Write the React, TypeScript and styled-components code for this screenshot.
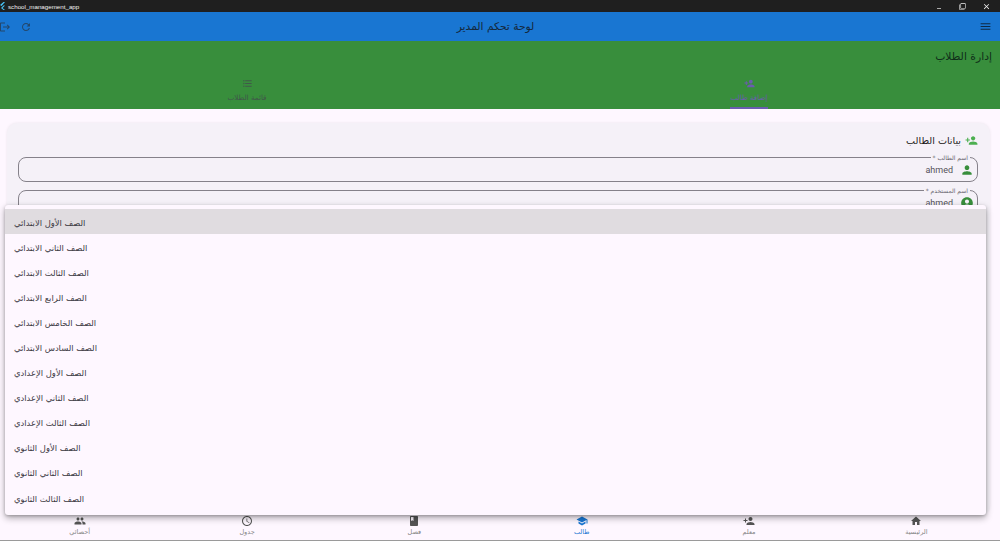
import styled, { createGlobalStyle } from 'styled-components'
import {
  MdMenu, MdRefresh, MdLogout, MdPersonAdd, MdPerson, MdAccountCircle, MdHome, MdSchool,
  MdBook, MdAccessTime, MdPeople, MdFormatListBulleted, MdMinimize, MdClose, MdFilterNone,
} from 'react-icons/md'

const Global = createGlobalStyle`
  html, body { margin: 0; padding: 0; height: 100%; }
  body { background: #fef7ff; font-family: "DejaVu Sans", "Noto Sans", sans-serif; overflow: hidden; }
`

const ui = {
  Page: styled.div`
    position: relative;
    width: 1000px;
    height: 541px;
    display: flex;
    flex-direction: column;
    overflow: hidden;
    background: #fef7ff;
  `,
  TitleBar: styled.div`
    height: 12px;
    flex: none;
    display: flex;
    align-items: center;
    justify-content: space-between;
    background: #1f1f1f;
    color: #f2f2f2;
    font: 6.2px "Liberation Sans", sans-serif;
    padding-left: 8px;
    position: relative;
  `,
  Logo: styled.svg`
    position: absolute;
    left: 0;
    top: 2px;
    width: 5px;
    height: 8px;
  `,
  WinButtons: styled.div`
    display: flex;
    align-items: center;
    gap: 16px;
    padding-right: 9px;
  `,
  AppBar: styled.header`
    height: 29px;
    flex: none;
    margin-left: -4px;
    display: grid;
    grid-template-columns: 1fr auto 1fr;
    align-items: center;
    padding: 0 8px 0 3px;
    background: #1976d2;
    color: #0f2a45;
  `,
  AppTitle: styled.h1`
    margin: 0;
    font-size: 10.7px;
    font-weight: 400;
    color: #14283c;
  `,
  BarActions: styled.div`
    display: flex;
    align-items: center;
    justify-content: flex-end;
    gap: 9px;
    color: #24476b;
  `,
  Green: styled.section`
    height: 68px;
    flex: none;
    margin-left: -4px;
    display: flex;
    flex-direction: column;
    background: #388e3c;
  `,
  Heading: styled.h2`
    margin: 0;
    padding: 9px 8px 0 0;
    height: 30px;
    box-sizing: border-box;
    font-size: 10.8px;
    font-weight: 400;
    color: #10301a;
  `,
  Tabs: styled.div`
    flex: 1;
    display: flex;
  `,
  Tab: styled.div<{ $active?: boolean }>`
    flex: 1;
    display: flex;
    flex-direction: column;
    align-items: center;
    justify-content: flex-end;
    gap: 4px;
    font-size: 7.2px;
    color: ${({ $active }) => ($active ? '#6a5cb0' : '#40584a')};
  `,
  TabLabel: styled.span<{ $active?: boolean }>`
    padding-bottom: 5px;
    width: 38px;
    text-align: center;
    white-space: nowrap;
    display: flex;
    justify-content: center;
    border-bottom: 2px solid ${({ $active }) => ($active ? '#6a5cb0' : 'transparent')};
  `,
  Content: styled.main`
    flex: 1;
    min-height: 0;
    padding: 14px 10px 0 7px;
  `,
  Card: styled.div`
    height: 100%;
    box-sizing: border-box;
    background: #f5f1f8;
    border-radius: 10px;
    padding: 10px 12px 0 11px;
    box-shadow: 0 0 3px rgba(0, 0, 0, 0.08);
  `,
  CardHead: styled.div`
    display: flex;
    align-items: center;
    gap: 4px;
    height: 14px;
    margin-bottom: 10px;
    font-size: 9.6px;
    color: #1d1b20;
    svg { color: #4caf50; }
  `,
  Field: styled.div`
    position: relative;
    height: 25px;
    box-sizing: border-box;
    margin-bottom: 8px;
    display: flex;
    align-items: center;
    gap: 7px;
    padding-right: 3px;
    border: 1px solid #85818a;
    border-radius: 8px;
    font: 9px "Roboto", sans-serif;
    color: #55525a;
    svg { color: #388e3c; }
  `,
  FieldLabel: styled.span`
    position: absolute;
    top: -4px;
    right: 7px;
    padding: 0 2px;
    background: #f5f1f8;
    font: 6px "DejaVu Sans", sans-serif;
    color: #6a6770;
  `,
  Nav: styled.nav`
    height: 25px;
    flex: none;
    margin-left: -4px;
    display: flex;
    border-bottom: 1px solid #9a9a9a;
    background: #fef7ff;
  `,
  NavItem: styled.div<{ $active?: boolean }>`
    flex: 1;
    display: flex;
    flex-direction: column;
    align-items: center;
    gap: 1px;
    font-size: 6.5px;
    color: ${({ $active }) => ($active ? '#1976d2' : '#858585')};
    svg { color: ${({ $active }) => ($active ? '#1976d2' : '#555')}; }
  `,
  Menu: styled.ul`
    position: absolute;
    left: 5px;
    top: 205px;
    width: 981px;
    height: 310px;
    box-sizing: border-box;
    margin: 0;
    padding: 4px 0;
    list-style: none;
    background: #fef7ff;
    border-radius: 3px;
    box-shadow: 0 3px 7px rgba(0, 0, 0, 0.32), 0 1px 3px rgba(0, 0, 0, 0.2);
  `,
  MenuItem: styled.li<{ $selected?: boolean }>`
    height: 25.1px;
    display: flex;
    align-items: center;
    padding: 2px 0 0 9px;
    box-sizing: border-box;
    font-size: 8.4px;
    color: #3a383f;
    background: ${({ $selected }) => ($selected ? '#e0dce0' : 'transparent')};
  `,
}

const grades = [
  'الصف الأول الابتدائي',
  'الصف الثاني الابتدائي',
  'الصف الثالث الابتدائي',
  'الصف الرابع الابتدائي',
  'الصف الخامس الابتدائي',
  'الصف السادس الابتدائي',
  'الصف الأول الإعدادي',
  'الصف الثاني الإعدادي',
  'الصف الثالث الإعدادي',
  'الصف الأول الثانوي',
  'الصف الثاني الثانوي',
  'الصف الثالث الثانوي',
]

const navItems = [
  { label: 'الرئيسية', icon: <MdHome size={12} /> },
  { label: 'معلم', icon: <MdPersonAdd size={12} /> },
  { label: 'طالب', icon: <MdSchool size={12} />, active: true },
  { label: 'فصل', icon: <MdBook size={12} /> },
  { label: 'جدول', icon: <MdAccessTime size={12} /> },
  { label: 'أحصائي', icon: <MdPeople size={12} /> },
]

const App = () => {
  return (
    <>
      <Global />
      <ui.Page>
        <ui.TitleBar>
          <ui.Logo viewBox="0 0 10 16">
            <path d="M7 0 L10 0 L3 8 L0 6 Z M7 7 L10 7 L5 12 L10 16 L7 16 L2 12 Z" fill="#47c5fb" />
          </ui.Logo>
          <span>school_management_app</span>
          <ui.WinButtons>
            <MdMinimize size={8} />
            <MdFilterNone size={7} />
            <MdClose size={9} />
          </ui.WinButtons>
        </ui.TitleBar>

        <ui.AppBar dir="rtl">
          <MdMenu size={13} />
          <ui.AppTitle>لوحة تحكم المدير</ui.AppTitle>
          <ui.BarActions>
            <MdRefresh size={12} />
            <MdLogout size={12} />
          </ui.BarActions>
        </ui.AppBar>

        <ui.Green dir="rtl">
          <ui.Heading>إدارة الطلاب</ui.Heading>
          <ui.Tabs>
            <ui.Tab $active>
              <MdPersonAdd size={11} />
              <ui.TabLabel $active>إضافة طالب</ui.TabLabel>
            </ui.Tab>
            <ui.Tab>
              <MdFormatListBulleted size={11} />
              <ui.TabLabel>قائمة الطلاب</ui.TabLabel>
            </ui.Tab>
          </ui.Tabs>
        </ui.Green>

        <ui.Content dir="rtl">
          <ui.Card>
            <ui.CardHead>
              <MdPersonAdd size={13} />
              بيانات الطالب
            </ui.CardHead>
            <ui.Field>
              <ui.FieldLabel>اسم الطالب *</ui.FieldLabel>
              <MdPerson size={14} />
              ahmed
            </ui.Field>
            <ui.Field>
              <ui.FieldLabel>اسم المستخدم *</ui.FieldLabel>
              <MdAccountCircle size={14} />
              ahmed
            </ui.Field>
          </ui.Card>
        </ui.Content>

        <ui.Nav dir="rtl">
          {navItems.map((item) => (
            <ui.NavItem key={item.label} $active={item.active}>
              {item.icon}
              {item.label}
            </ui.NavItem>
          ))}
        </ui.Nav>

        <ui.Menu>
          {grades.map((grade, i) => (
            <ui.MenuItem key={grade} $selected={i === 0}>
              {grade}
            </ui.MenuItem>
          ))}
        </ui.Menu>
      </ui.Page>
    </>
  )
}

export default App
